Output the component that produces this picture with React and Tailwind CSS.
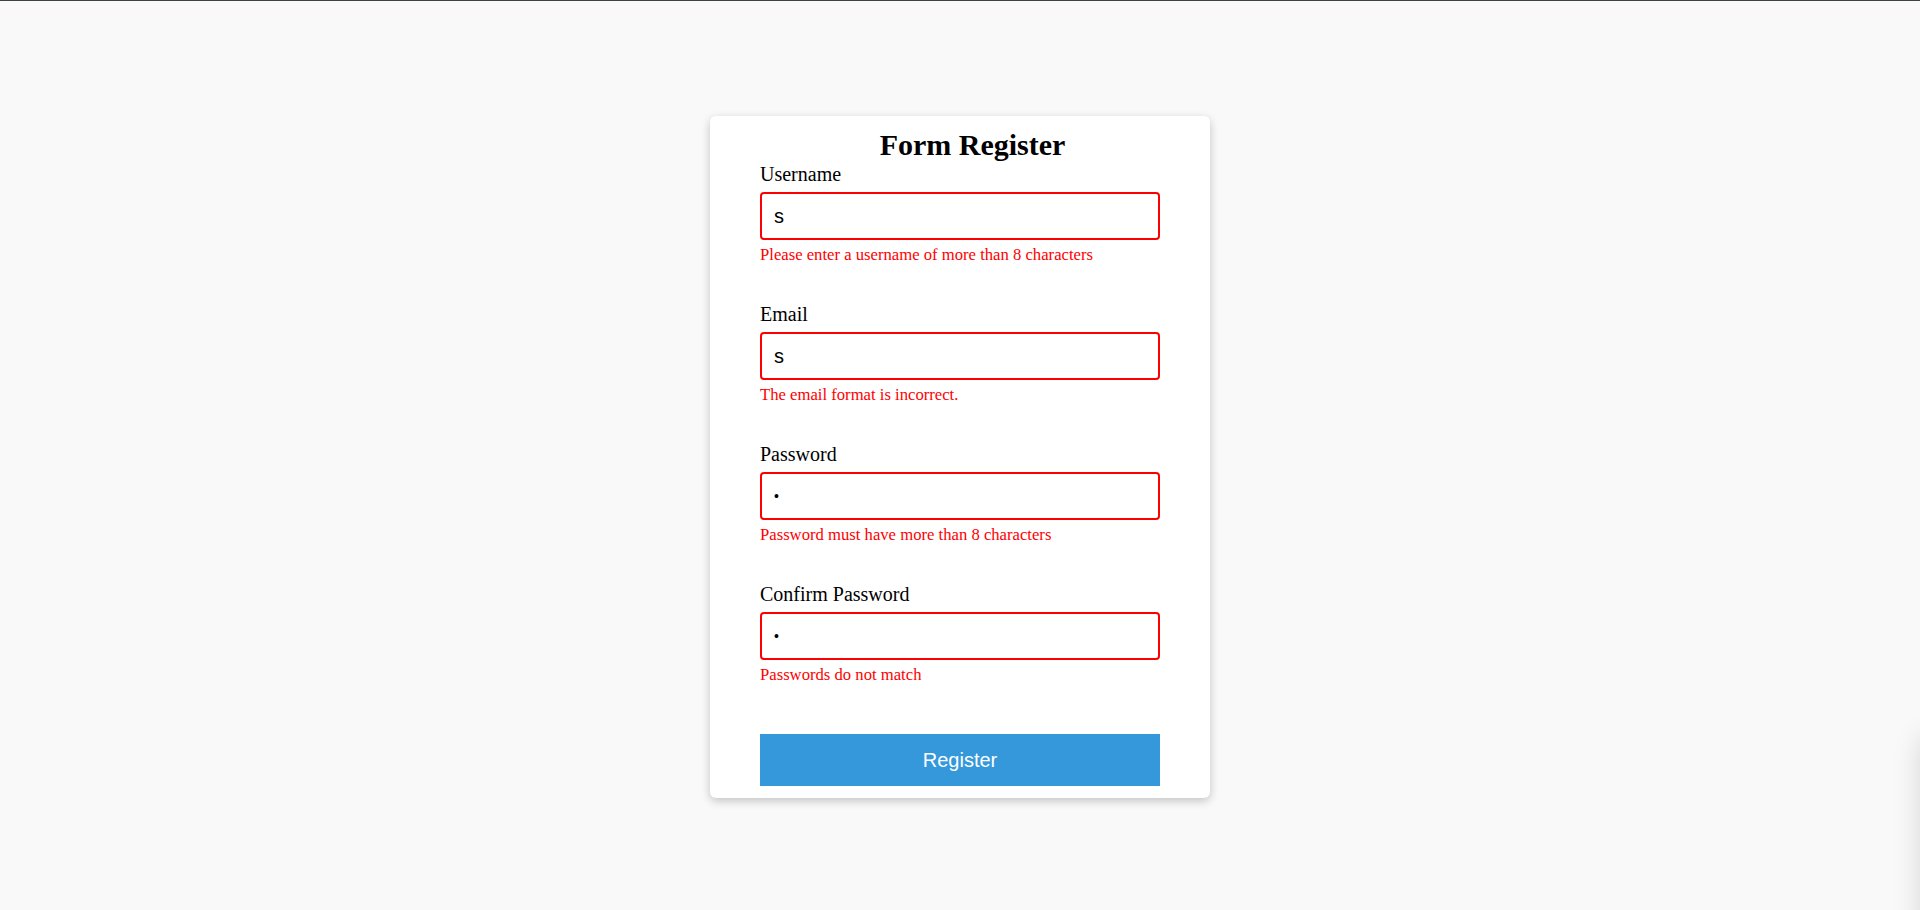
import React, { useState } from "react";

const fields = [
  { id: "username", label: "Username", type: "text", value: "s", error: "Please enter a username of more than 8 characters" },
  { id: "email", label: "Email", type: "text", value: "s", error: "The email format is incorrect." },
  { id: "password", label: "Password", type: "password", value: "s", error: "Password must have more than 8 characters" },
  { id: "confirm", label: "Confirm Password", type: "password", value: "s", error: "Passwords do not match" },
];

function Field({ field, value, onChange }) {
  // password bullets are much smaller in the original, so shrink the font there
  const sizeClass = field.type === "password" ? "text-[14px]" : "text-[20px]";
  return (
    <div className="mb-[37px] last:mb-0">
      <label htmlFor={field.id} className="block pt-[2px] text-[20px] leading-[22px] text-black">
        {field.label}
      </label>
      <input
        id={field.id}
        type={field.type}
        value={value}
        onChange={(e) => onChange(field.id, e.target.value)}
        className={`mt-[7px] block w-full h-[48px] rounded-[4px] border-2 border-[#ff0000] bg-white pl-[12px] text-black outline-none font-['Liberation_Sans',Arial,sans-serif] ${sizeClass}`}
      />
      <small className="mt-[6px] block text-[16.67px] leading-[18px] text-[#ff0000]">{field.error}</small>
    </div>
  );
}

export default function App() {
  const [values, setValues] = useState(
    Object.fromEntries(fields.map((f) => [f.id, f.value]))
  );

  const handleChange = (id, v) => setValues((prev) => ({ ...prev, [id]: v }));

  return (
    <div className="min-h-screen bg-[#f9f9f9] border-t border-[#3c4442] pt-[115px] font-['Liberation_Serif','Times_New_Roman',serif]">
      <form
        onSubmit={(e) => e.preventDefault()}
        className="mx-auto w-[500px] rounded-[6px] bg-white px-[50px] pt-[12px] pb-[12px] shadow-[0_3px_10px_rgba(0,0,0,0.22)]"
      >
        <h2 className="pl-[25px] text-center text-[30px] font-bold leading-[33px] text-black">Form Register</h2>
        {fields.map((f) => (
          <Field key={f.id} field={f} value={values[f.id]} onChange={handleChange} />
        ))}
        <button
          type="submit"
          className="mt-[50px] block w-full h-[52px] bg-[#3498db] text-[20px] text-white font-['Liberation_Sans',Arial,sans-serif]"
        >
          Register
        </button>
      </form>
      {/* shadow of something sitting just past the right edge */}
      <div className="fixed left-[1920px] top-[735px] h-[400px] w-[300px] rounded-tl-[12px] bg-white shadow-[0_0_28px_rgba(0,0,0,0.14)]" />
    </div>
  );
}
